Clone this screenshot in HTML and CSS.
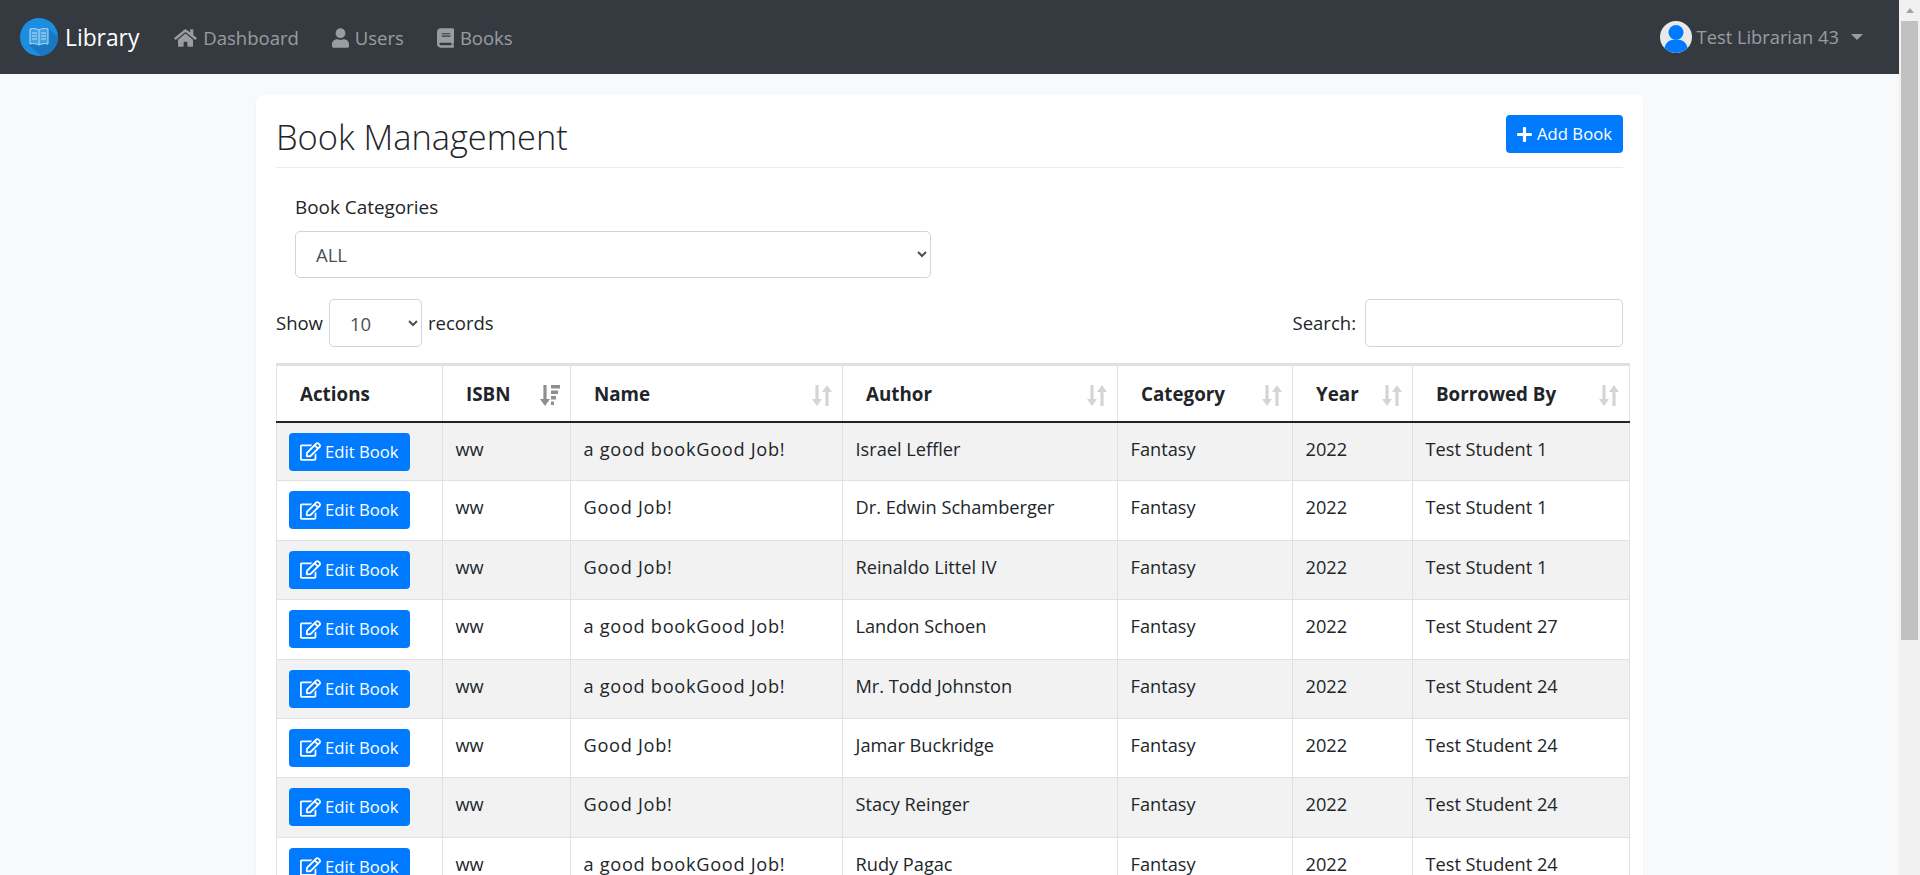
FILE: index.html
```html
<!DOCTYPE html>
<html lang="en">
<head>
    <meta charset="UTF-8">
    <title>Library</title>
    <link rel="stylesheet" href="styles.css">
</head>
<body>
    <svg class="icon-defs" aria-hidden="true">
        <symbol id="i-home" viewBox="0 0 576 512"><path d="M280.37 148.26L96 300.11V464a16 16 0 0 0 16 16l112.06-.29a16 16 0 0 0 15.92-16V368a16 16 0 0 1 16-16h64a16 16 0 0 1 16 16v95.64a16 16 0 0 0 16 16.05L464 480a16 16 0 0 0 16-16V300L295.67 148.26a12.19 12.19 0 0 0-15.3 0zM571.6 251.47L488 182.56V44.05a12 12 0 0 0-12-12h-56a12 12 0 0 0-12 12v72.61L318.47 43a48 48 0 0 0-61 0L4.34 251.47a12 12 0 0 0-1.6 16.9l25.5 31A12 12 0 0 0 45.15 301l235.22-193.74a12.19 12.19 0 0 1 15.3 0L530.9 301a12 12 0 0 0 16.9-1.6l25.5-31a12 12 0 0 0-1.7-16.93z"/></symbol>
        <symbol id="i-user" viewBox="0 0 448 512"><path d="M224 256c70.7 0 128-57.3 128-128S294.7 0 224 0 96 57.3 96 128s57.3 128 128 128zm89.6 32h-16.7c-22.2 10.2-46.9 16-72.9 16s-50.6-5.8-72.9-16h-16.7C60.2 288 0 348.2 0 422.4V464c0 26.5 21.5 48 48 48h352c26.5 0 48-21.5 48-48v-41.6c0-74.2-60.2-134.4-134.4-134.4z"/></symbol>
        <symbol id="i-book" viewBox="0 0 448 512"><path d="M448 360V24c0-13.3-10.7-24-24-24H96C43 0 0 43 0 96v320c0 53 43 96 96 96h328c13.3 0 24-10.7 24-24v-16c0-7.5-3.5-14.3-8.9-18.7-4.2-15.4-4.2-59.3 0-74.7 5.4-4.3 8.9-11.1 8.9-18.6zM128 134c0-3.3 2.7-6 6-6h212c3.3 0 6 2.7 6 6v20c0 3.3-2.7 6-6 6H134c-3.3 0-6-2.7-6-6v-20zm0 64c0-3.3 2.7-6 6-6h212c3.3 0 6 2.7 6 6v20c0 3.3-2.7 6-6 6H134c-3.3 0-6-2.7-6-6v-20zm253.4 250H96c-17.7 0-32-14.3-32-32 0-17.6 14.4-32 32-32h285.4c-1.9 17.1-1.9 46.9 0 64z"/></symbol>
        <symbol id="i-plus" viewBox="0 0 448 512"><path d="M416 208H272V64c0-17.67-14.33-32-32-32h-32c-17.67 0-32 14.33-32 32v144H32c-17.67 0-32 14.33-32 32v32c0 17.67 14.33 32 32 32h144v144c0 17.67 14.33 32 32 32h32c17.67 0 32-14.33 32-32V304h144c17.67 0 32-14.33 32-32v-32c0-17.67-14.33-32-32-32z"/></symbol>
        <symbol id="i-edit" viewBox="0 0 576 512"><path d="M402.3 344.9l32-32c5-5 13.7-1.5 13.7 5.7V464c0 26.5-21.5 48-48 48H48c-26.5 0-48-21.5-48-48V112c0-26.5 21.5-48 48-48h273.5c7.1 0 10.7 8.6 5.7 13.7l-32 32c-1.5 1.5-3.5 2.3-5.7 2.3H48v352h352V350.5c0-2.1.8-4.1 2.3-5.6zm156.6-201.8L296.3 405.7l-90.4 10c-26.2 2.9-48.5-19.2-45.6-45.6l10-90.4L432.9 17.1c22.9-22.9 59.9-22.9 82.7 0l43.2 43.2c22.9 22.9 22.9 60 .1 82.8zM460.1 174L402 115.9 216.2 301.8l-7.3 65.3 65.3-7.3L460.1 174zm64.8-79.7l-43.2-43.2c-4.1-4.1-10.8-4.1-14.8 0L436 82l58.1 58.1 30.9-30.9c4-4.2 4-10.8-.1-14.9z"/></symbol>
        <symbol id="i-sort" viewBox="0 0 20 21"><path d="M3.400 0h3.200v14h3.400l-5 7-5-7h3.400zM13.400 21h3.200V7H20l-5-7-5 7h3.400z"/></symbol>
        <symbol id="i-sort-down" viewBox="0 0 20 21"><path d="M3.400 0h3.200v14h3.400l-5 7-5-7h3.400zM11 0h9v3.500h-9zM11 5.500h7v3.500h-7zM11 11h5v3.500h-5zM11 16.500h3V20h-3z"/></symbol>
    </svg>

    <div class="window">
        <div class="page">
            <nav class="navbar">
                <a class="brand" href="#">
                    <svg class="brand-logo" viewBox="0 0 38 38">
                        <circle cx="19" cy="19" r="19" fill="#1b8ee0"/>
                        <path d="M9 27 L29 11 L38 19 A19 19 0 0 1 21 38 Z" fill="#1878c2"/>
                        <path d="M10 11c3.500-.8 6.500-.4 9 1 2.500-1.400 5.500-1.800 9-1v15c-3.500-.8-6.500-.4-9 1-2.500-1.400-5.500-1.800-9-1z" fill="#3f9fe4" stroke="#bcdcf3"/>
                        <path d="M19 12v15" stroke="#bcdcf3"/>
                        <path d="M12 15h5M12 18h5M12 21h5M21 15h5M21 18h5M21 21h5" stroke="#bcdcf3"/>
                    </svg>
                    <span>Library</span>
                </a>
                <ul class="nav-links">
                    <li><a href="#"><svg class="nav-icon nav-icon-home"><use href="#i-home"/></svg>Dashboard</a></li>
                    <li><a href="#"><svg class="nav-icon"><use href="#i-user"/></svg>Users</a></li>
                    <li><a href="#"><svg class="nav-icon"><use href="#i-book"/></svg>Books</a></li>
                </ul>
                <a class="nav-user" href="#">
                    <svg class="avatar" viewBox="0 0 32 32">
                        <circle cx="16" cy="16" r="16" fill="#e9e9e9"/>
                        <circle cx="16" cy="11.500" r="7.500" fill="#007bff"/>
                        <path d="M4.500 27c1-5.500 5-8 8-8h7c3 0 7 2.500 8 8a16 16 0 0 1-23 0z" fill="#007bff"/>
                    </svg>
                    <span>Test Librarian 43</span>
                    <i class="caret"></i>
                </a>
            </nav>

            <main class="content">
                <div class="card">
                    <div class="card-head">
                        <h1>Book Management</h1>
                        <a class="btn btn-add" href="#"><svg class="btn-icon-plus"><use href="#i-plus"/></svg>Add Book</a>
                    </div>

                    <div class="category-filter">
                        <label for="categoria">Book Categories</label>
                        <select id="categoria" class="field">
                            <option>ALL</option>
                        </select>
                    </div>

                    <div class="table-tools">
                        <label class="tool">Show
                            <select class="field field-small">
                                <option>10</option>
                            </select>
                            records</label>
                        <label class="tool">Search:
                            <input type="text" class="field field-search">
                        </label>
                    </div>

                    <table class="books">
                        <colgroup>
                            <col class="c-actions"><col class="c-isbn"><col class="c-name"><col class="c-author"><col class="c-category"><col class="c-year"><col class="c-borrowed">
                        </colgroup>
                        <thead>
                            <tr>
                                <th>Actions</th>
                                <th>ISBN<svg class="sort sort-active"><use href="#i-sort-down"/></svg></th>
                                <th>Name<svg class="sort"><use href="#i-sort"/></svg></th>
                                <th>Author<svg class="sort"><use href="#i-sort"/></svg></th>
                                <th>Category<svg class="sort"><use href="#i-sort"/></svg></th>
                                <th>Year<svg class="sort"><use href="#i-sort"/></svg></th>
                                <th>Borrowed By<svg class="sort"><use href="#i-sort"/></svg></th>
                            </tr>
                        </thead>
                        <tbody>
                            <tr>
                                <td><a class="btn" href="#"><svg class="btn-icon-edit"><use href="#i-edit"/></svg>Edit Book</a></td>
                                <td>ww</td><td class="name-cell">a good bookGood Job!</td><td>Israel Leffler</td><td>Fantasy</td><td>2022</td><td>Test Student 1</td>
                            </tr>
                            <tr>
                                <td><a class="btn" href="#"><svg class="btn-icon-edit"><use href="#i-edit"/></svg>Edit Book</a></td>
                                <td>ww</td><td class="name-cell">Good Job!</td><td>Dr. Edwin Schamberger</td><td>Fantasy</td><td>2022</td><td>Test Student 1</td>
                            </tr>
                            <tr>
                                <td><a class="btn" href="#"><svg class="btn-icon-edit"><use href="#i-edit"/></svg>Edit Book</a></td>
                                <td>ww</td><td class="name-cell">Good Job!</td><td>Reinaldo Littel IV</td><td>Fantasy</td><td>2022</td><td>Test Student 1</td>
                            </tr>
                            <tr>
                                <td><a class="btn" href="#"><svg class="btn-icon-edit"><use href="#i-edit"/></svg>Edit Book</a></td>
                                <td>ww</td><td class="name-cell">a good bookGood Job!</td><td>Landon Schoen</td><td>Fantasy</td><td>2022</td><td>Test Student 27</td>
                            </tr>
                            <tr>
                                <td><a class="btn" href="#"><svg class="btn-icon-edit"><use href="#i-edit"/></svg>Edit Book</a></td>
                                <td>ww</td><td class="name-cell">a good bookGood Job!</td><td>Mr. Todd Johnston</td><td>Fantasy</td><td>2022</td><td>Test Student 24</td>
                            </tr>
                            <tr>
                                <td><a class="btn" href="#"><svg class="btn-icon-edit"><use href="#i-edit"/></svg>Edit Book</a></td>
                                <td>ww</td><td class="name-cell">Good Job!</td><td>Jamar Buckridge</td><td>Fantasy</td><td>2022</td><td>Test Student 24</td>
                            </tr>
                            <tr>
                                <td><a class="btn" href="#"><svg class="btn-icon-edit"><use href="#i-edit"/></svg>Edit Book</a></td>
                                <td>ww</td><td class="name-cell">Good Job!</td><td>Stacy Reinger</td><td>Fantasy</td><td>2022</td><td>Test Student 24</td>
                            </tr>
                            <tr>
                                <td><a class="btn" href="#"><svg class="btn-icon-edit"><use href="#i-edit"/></svg>Edit Book</a></td>
                                <td>ww</td><td class="name-cell">a good bookGood Job!</td><td>Rudy Pagac</td><td>Fantasy</td><td>2022</td><td>Test Student 24</td>
                            </tr>
                        </tbody>
                    </table>
                </div>
            </main>
        </div>

        <div class="scrollbar">
            <i class="scroll-arrow"></i>
            <div class="scroll-thumb"></div>
        </div>
    </div>
</body>
</html>
```

FILE: styles.css
```css
* {
    box-sizing: border-box;
}

html, body {
    height: 100%;
    margin: 0;
}

body {
    font-family: "Open Sans", "Noto Sans", Arial, sans-serif;
    font-size: 18.5px;
    line-height: 24px;
    color: #212529;
    background-color: #f8f9fa;
}

a {
    text-decoration: none;
}

.icon-defs {
    display: none;
}

.window {
    display: flex;
    height: 100vh;
    overflow: hidden;
}

.page {
    flex: 1;
    min-width: 0;
}

/* fake scrollbar, the window is cut at 875px */
.scrollbar {
    width: 21px;
    padding: 0 2px;
    background-color: #f1f1f1;
}

.scroll-arrow {
    display: block;
    width: 0;
    margin: 8px auto 8px;
    border-left: 4px solid transparent;
    border-right: 4px solid transparent;
    border-bottom: 5px solid #a3a3a3;
}

.scroll-thumb {
    height: 619px;
    background-color: #c1c1c1;
}

/* navbar */
.navbar {
    display: flex;
    align-items: center;
    height: 74px;
    padding: 2px 16px 0 20px;
    background-color: #343a40;
}

.brand {
    display: flex;
    align-items: center;
    gap: 7px;
    color: white;
    font-size: 22.8px;
}

.brand-logo {
    width: 38px;
    height: 38px;
    margin-top: -2px;
}

.nav-links {
    display: flex;
    gap: 17px;
    margin: 0 0 0 27px;
    padding: 0;
    list-style: none;
}

.nav-links a {
    display: flex;
    align-items: center;
    padding: 8px;
    color: rgba(255,255,255,0.5);
}

.nav-icon {
    width: 17px;
    height: 20px;
    margin-right: 6px;
    fill: rgba(255,255,255,0.5);
}

.nav-icon-home {
    width: 23px;
}

.nav-user {
    display: flex;
    align-items: center;
    margin-top: -2px;
    margin-left: auto;
    margin-right: 20px;
    color: rgba(255,255,255,0.5);
    font-size: 18.3px;
}

.avatar {
    width: 32px;
    height: 32px;
    margin-right: 5px;
}

.caret {
    margin-left: 12px;
    border-top: 6px solid rgba(255,255,255,0.5);
    border-left: 6px solid transparent;
    border-right: 6px solid transparent;
}

/* main card */
.content {
    padding: 21px 256px 0;
}

.card {
    width: 1387px;
    padding: 20px;
    background: white;
    border-radius: 6px;
    box-shadow: 0 1px 2px rgba(0,0,0,0.05);
}

.card-head {
    display: flex;
    align-items: flex-start;
    justify-content: space-between;
    height: 53px;
    border-bottom: 1px solid #e9ecef;
}

.card-head h1 {
    margin: 0;
    font-size: 34.4px;
    font-weight: 300;
    line-height: 43px;
}

.btn {
    display: inline-flex;
    align-items: center;
    height: 38px;
    padding: 0 11px;
    color: white;
    background-color: #007bff;
    border-radius: 4px;
    font-size: 16.7px;
}

.btn-icon-plus {
    width: 15px;
    height: 17px;
    margin-right: 5px;
    fill: white;
}

.btn-icon-edit {
    width: 21px;
    height: 19px;
    margin-right: 4px;
    fill: white;
}

.category-filter {
    width: 636px;
    margin: 27px 0 0 19px;
}

.category-filter label {
    display: block;
    height: 24px;
    margin-bottom: 12px;
    font-size: 18.9px;
}

.field {
    height: 47px;
    padding: 0 16px;
    color: #495057;
    background-color: white;
    border: 1px solid #ced4da;
    border-radius: 5px;
    font-family: inherit;
    font-size: 18.5px;
}

#categoria {
    width: 100%;
}

.table-tools {
    display: flex;
    align-items: center;
    justify-content: space-between;
    margin-top: 21px;
}

.tool {
    display: flex;
    align-items: center;
    gap: 5px;
}

.field-small {
    width: 93px;
    height: 48px;
    margin-right: 1px;
    margin-left: 1px;
}

.field-search {
    width: 258px;
    height: 48px;
    margin-left: 4px;
}

/* tabla */
.books {
    width: 1353px;
    margin-top: 16px;
    table-layout: fixed;
    border-collapse: collapse;
    border-top: 3px solid #dee2e6;
    border-left: 1px solid #dee2e6;
    border-right: 1px solid #dee2e6;
}

.c-actions { width: 166px; }
.c-isbn { width: 128px; }
.c-name { width: 272px; }
.c-author { width: 275px; }
.c-category { width: 175px; }
.c-year { width: 120px; }
.c-borrowed { width: 217px; }

.books th {
    position: relative;
    height: 57px;
    padding: 2px 23px 0;
    font-size: 18.8px;
    font-weight: 700;
    text-align: left;
    border-left: 1px solid #dee2e6;
    border-bottom: 2px solid #212529;
}

.books td {
    height: 59.4px;
    padding: 14px 12.5px 0;
    font-size: 18.2px;
    border-left: 1px solid #dee2e6;
    border-top: 1px solid #dee2e6;
    vertical-align: top;
}

.books td:first-child {
    padding: 10px 12px 0;
}

/* Good Job! runs wider in the reference font */
.books .name-cell {
    letter-spacing: 0.7px;
}

.books tbody tr:nth-child(odd) {
    background-color: #f2f2f2;
}

.sort {
    position: absolute;
    top: 19px;
    right: 10px;
    width: 20px;
    height: 21px;
    fill: #d5d5d5;
}

.sort-active {
    fill: #8f8f8f;
}
```
